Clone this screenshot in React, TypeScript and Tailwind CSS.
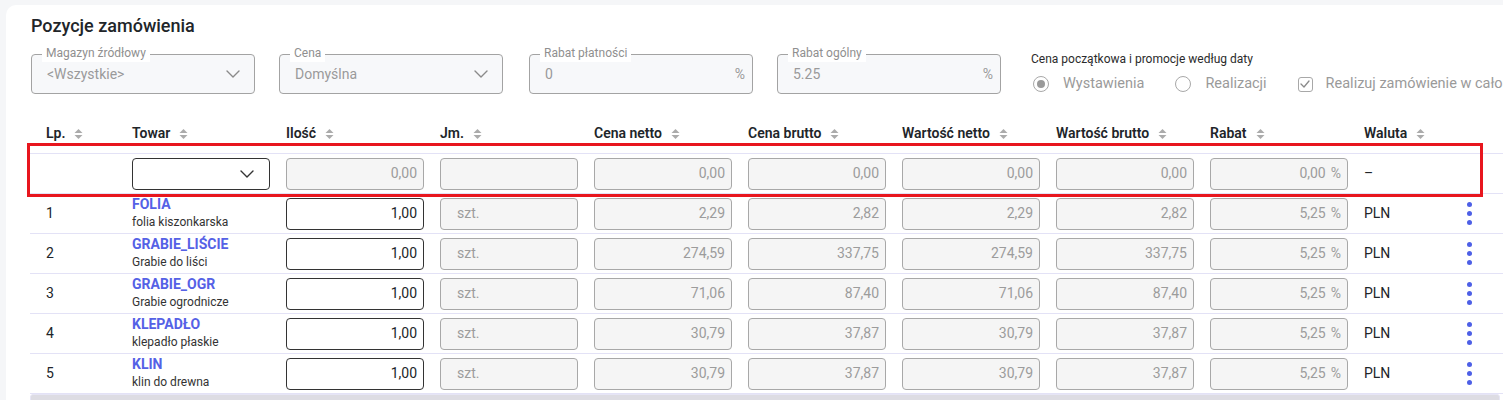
import { useState } from "react";

type Pozycja = {
  code: string;
  name: string;
  cenaNetto: string;
  cenaBrutto: string;
  wartoscNetto: string;
  wartoscBrutto: string;
};

const pozycje: Pozycja[] = [
  { code: "FOLIA", name: "folia kiszonkarska", cenaNetto: "2,29", cenaBrutto: "2,82", wartoscNetto: "2,29", wartoscBrutto: "2,82" },
  { code: "GRABIE_LIŚCIE", name: "Grabie do liści", cenaNetto: "274,59", cenaBrutto: "337,75", wartoscNetto: "274,59", wartoscBrutto: "337,75" },
  { code: "GRABIE_OGR", name: "Grabie ogrodnicze", cenaNetto: "71,06", cenaBrutto: "87,40", wartoscNetto: "71,06", wartoscBrutto: "87,40" },
  { code: "KLEPADŁO", name: "klepadło płaskie", cenaNetto: "30,79", cenaBrutto: "37,87", wartoscNetto: "30,79", wartoscBrutto: "37,87" },
  { code: "KLIN", name: "klin do drewna", cenaNetto: "30,79", cenaBrutto: "37,87", wartoscNetto: "30,79", wartoscBrutto: "37,87" },
];

const headers = ["Lp.", "Towar", "Ilość", "Jm.", "Cena netto", "Cena brutto", "Wartość netto", "Wartość brutto", "Rabat", "Waluta"];

const gridCols = "grid grid-cols-[86px_154px_154px_154px_154px_154px_154px_154px_154px_100px_60px]";

const SortIcon = () => (
  <svg width="9" height="12" viewBox="0 0 9 12" className="ml-[9px] shrink-0">
    <polygon points="0.5,5 4.5,1 8.5,5" fill="#ababab" />
    <polygon points="0.5,7 4.5,11 8.5,7" fill="#ababab" />
  </svg>
);

const Chevron = ({ color = "#8a8a8a" }: { color?: string }) => (
  <svg width="14" height="8" viewBox="0 0 14 8" fill="none">
    <path d="M1 1l6 6 6-6" stroke={color} strokeWidth="1.4" strokeLinecap="round" strokeLinejoin="round" />
  </svg>
);

const OutlinedField = ({
  label,
  value,
  suffix,
  select,
}: {
  label: string;
  value: string;
  suffix?: string;
  select?: boolean;
}) => (
  <div className="relative w-[224px] h-[40px] rounded-[4px] border border-[#a3a3a3] bg-[#f7f8fa] flex items-center pl-[15px] pr-[14px]">
    <span className="absolute -top-[10px] left-[10px] px-[4px] bg-white text-[12px] leading-[17px] text-[#8f8f8f]">
      {label}
    </span>
    <span className="flex-1 text-[14px] text-[#9a9a9a] pt-[1px]">{value}</span>
    {select && <Chevron />}
    {suffix && <span className="text-[14px] text-[#9a9a9a] -mr-[7px]">{suffix}</span>}
  </div>
);

const DisabledInput = ({ value, suffix, left }: { value: string; suffix?: string; left?: boolean }) => (
  <div
    className={`w-[138px] h-[32px] rounded-[4px] border border-[#a8a8a8] bg-[#f5f5f5] flex items-center text-[14px] text-[#9c9c9c] ${
      left ? "justify-start pl-[16px]" : "justify-end pr-[6px]"
    }`}
  >
    {value}
    {suffix && <span className="ml-[5px] text-[14px]">{suffix}</span>}
  </div>
);

const ActiveInput = ({ value }: { value: string }) => (
  <div className="w-[138px] h-[32px] rounded-[4px] border border-[#333] bg-white flex items-center justify-end pr-[6px] text-[14px] text-[#212529]">
    {value}
  </div>
);

const MoreDots = () => (
  <div className="flex flex-col gap-[4px] items-center w-[5px]">
    <span className="w-[5px] h-[5px] rounded-full bg-[#4d5fe6]" />
    <span className="w-[5px] h-[5px] rounded-full bg-[#4d5fe6]" />
    <span className="w-[5px] h-[5px] rounded-full bg-[#4d5fe6]" />
  </div>
);

const App = () => {
  const [dateMode] = useState<"wystawienia" | "realizacji">("wystawienia");

  return (
    <div className="w-[1503px] h-[400px] overflow-hidden bg-[#f5f6f8] pt-[5px] pl-[6px] font-['Roboto',sans-serif]">
      <div className="w-[1540px] h-[420px] bg-white rounded-tl-[10px] pl-[25px] pt-[9px]">
        <h2 className="text-[18px] leading-[24px] font-medium text-[#212529]">Pozycje zamówienia</h2>

        <div className="flex items-start mt-[16px]">
          <div className="flex gap-[24px]">
            <OutlinedField label="Magazyn źródłowy" value="<Wszystkie>" select />
            <OutlinedField label="Cena" value="Domyślna" select />
            <div className="ml-[2px]">
              <OutlinedField label="Rabat płatności" value="0" suffix="%" />
            </div>
            <OutlinedField label="Rabat ogólny" value="5.25" suffix="%" />
          </div>

          <div className="ml-[30px] -mt-[3px] flex flex-col">
            <span className="text-[12px] leading-[16px] text-[#2b2b2b]">
              Cena początkowa i promocje według daty
            </span>
            <div className="flex items-center mt-[6px] h-[22px]">
              <div className="flex items-center ml-[2px]">
                <span className="w-[16px] h-[16px] rounded-full border border-[#a8a8a8] flex items-center justify-center">
                  {dateMode === "wystawienia" && <span className="w-[8px] h-[8px] rounded-full bg-[#9a9a9a]" />}
                </span>
                <span className="ml-[14px] text-[14.5px] text-[#9a9a9a]">Wystawienia</span>
              </div>
              <div className="flex items-center ml-[31px]">
                <span className="w-[16px] h-[16px] rounded-full border border-[#a8a8a8]" />
                <span className="ml-[14px] text-[14.5px] text-[#9a9a9a]">Realizacji</span>
              </div>
              <div className="flex items-center ml-[31px]">
                <span className="w-[15px] h-[15px] rounded-[3px] border border-[#a8a8a8] flex items-center justify-center">
                  <svg width="10" height="8" viewBox="0 0 10 8" fill="none">
                    <path d="M1 4l3 3 5-6" stroke="#8a8a8a" strokeWidth="1.3" strokeLinecap="round" strokeLinejoin="round" />
                  </svg>
                </span>
                <span className="ml-[13px] text-[14.5px] text-[#9a9a9a] whitespace-nowrap">
                  Realizuj zamówienie w całości
                </span>
              </div>
            </div>
          </div>
        </div>

        <div className="relative mt-[19px] -ml-[1px] w-[1480px]">
          <div className={`${gridCols} h-[40px] border-b border-[#e3e2f6] items-center`}>
            {headers.map((h) => (
              <div key={h} className="pl-[16px] flex items-center text-[14px] font-semibold text-[#212529]">
                {h}
                <SortIcon />
              </div>
            ))}
            <div />
          </div>

          <div className={`${gridCols} h-[40px] border-b border-[#e3e2f6] items-center`}>
            <div />
            <div className="pl-[16px]">
              <div className="w-[138px] h-[32px] rounded-[4px] border border-[#333] bg-white flex items-center justify-end pr-[15px]">
                <Chevron color="#333" />
              </div>
            </div>
            {["0,00", "", "0,00", "0,00", "0,00", "0,00"].map((v, i) => (
              <div key={i} className="pl-[16px]">
                <DisabledInput value={v} />
              </div>
            ))}
            <div className="pl-[16px]">
              <DisabledInput value="0,00" suffix="%" />
            </div>
            <div className="pl-[16px] text-[14px] text-[#212529]">–</div>
            <div />
          </div>

          {pozycje.map((p, idx) => (
            <div key={p.code} className={`${gridCols} h-[40px] border-b border-[#e3e2f6] items-center`}>
              <div className="pl-[16px] text-[14px] text-[#212529]">{idx + 1}</div>
              <div className="pl-[16px] flex flex-col">
                <span className="text-[14px] leading-[17px] font-bold text-[#5561e6]">{p.code}</span>
                <span className="text-[12px] leading-[19px] text-[#333]">{p.name}</span>
              </div>
              <div className="pl-[16px]">
                <ActiveInput value="1,00" />
              </div>
              <div className="pl-[16px]">
                <DisabledInput value="szt." left />
              </div>
              <div className="pl-[16px]">
                <DisabledInput value={p.cenaNetto} />
              </div>
              <div className="pl-[16px]">
                <DisabledInput value={p.cenaBrutto} />
              </div>
              <div className="pl-[16px]">
                <DisabledInput value={p.wartoscNetto} />
              </div>
              <div className="pl-[16px]">
                <DisabledInput value={p.wartoscBrutto} />
              </div>
              <div className="pl-[16px]">
                <DisabledInput value="5,25" suffix="%" />
              </div>
              <div className="pl-[16px] text-[14px] text-[#212529]">PLN</div>
              <div className="pl-[19px]">
                <MoreDots />
              </div>
            </div>
          ))}

          <div className="h-[12px] w-[1470px] rounded-[3px] border border-[#e6e5f5] bg-[#dddce3]" />

          <div className="absolute left-[-3px] top-[29px] w-[1456px] h-[54px] border-[3px] border-[#e8161e] pointer-events-none" />
        </div>
      </div>
    </div>
  );
};

export default App;
